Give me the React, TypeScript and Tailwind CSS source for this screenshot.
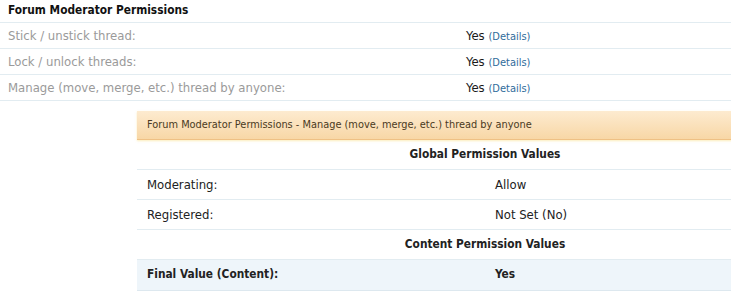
const topRows = [
  "Stick / unstick thread:",
  "Lock / unlock threads:",
  "Manage (move, merge, etc.) thread by anyone:",
];

const globalRows = [
  { label: "Moderating:", value: "Allow" },
  { label: "Registered:", value: "Not Set (No)" },
];

export default function App() {
  return (
    <div className="w-[731px] h-[300px] overflow-hidden bg-white text-[13px] text-[#222] font-['DejaVu_Sans_Condensed','DejaVu_Sans',sans-serif] [font-stretch:condensed]">
      <div className="w-[916px]">
        <h3 className="h-[23px] px-2 flex items-center font-bold text-[11.8px] text-[#111] border-b border-[#e2ecf1]">
          Forum Moderator Permissions
        </h3>
        {topRows.map((label) => (
          <div
            key={label}
            className="grid grid-cols-2 h-[26px] items-center border-b border-[#e2ecf1]"
          >
            <div className="px-2 text-[#9a9a9a]">{label}</div>
            <div className="px-2">
              <span className="text-[#1a1a1a]">Yes</span>{" "}
              <a className="text-[11px] text-[#2f6c9b]">(Details)</a>
            </div>
          </div>
        ))}
      </div>

      <div className="ml-[137px] mt-[10px] w-[696px]">
        <div className="h-[29px] px-[10px] flex items-center text-[10.9px] text-[#4a3a22] bg-gradient-to-b from-[#fdebd0] to-[#f8d7a6] border-b border-[#efc185] shadow-[0_1px_2px_rgba(250,220,120,0.5)]">
          Forum Moderator Permissions - Manage (move, merge, etc.) thread by anyone
        </div>
        <div className="h-[30px] flex items-center justify-center font-bold text-[11.8px] border-b border-[#e2ecf1]">
          Global Permission Values
        </div>
        {globalRows.map((r) => (
          <div
            key={r.label}
            className="grid grid-cols-2 h-[30px] items-center border-b border-[#e2ecf1]"
          >
            <div className="px-[10px]">{r.label}</div>
            <div className="px-[10px]">{r.value}</div>
          </div>
        ))}
        <div className="h-[30px] flex items-center justify-center font-bold text-[11.8px] border-b border-[#e2ecf1]">
          Content Permission Values
        </div>
        <div className="grid grid-cols-2 h-[31px] items-center font-bold text-[11.8px] bg-[#eef5fa] border-b border-[#dde8ef]">
          <div className="px-[10px]">Final Value (Content):</div>
          <div className="px-[10px]">Yes</div>
        </div>
      </div>
    </div>
  );
}
